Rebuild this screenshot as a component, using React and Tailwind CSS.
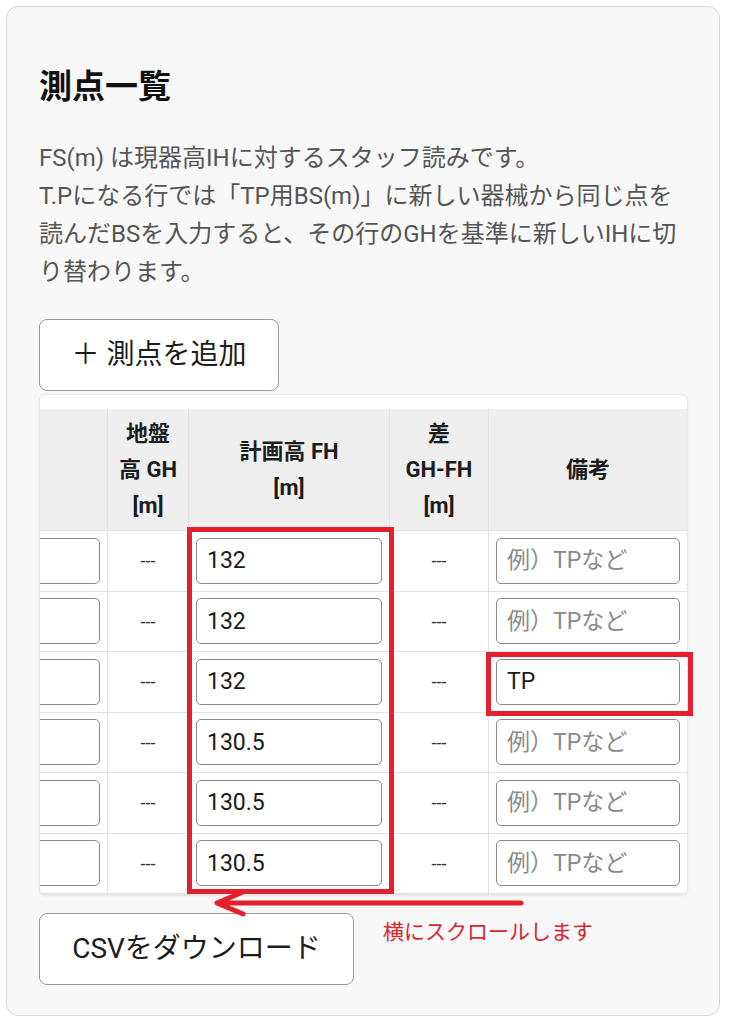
import { useLayoutEffect, useRef } from 'react';

const rows = [
  { fh: '132', note: '' },
  { fh: '132', note: '' },
  { fh: '132', note: 'TP' },
  { fh: '130.5', note: '' },
  { fh: '130.5', note: '' },
  { fh: '130.5', note: '' },
];

const gridCols =
  'grid grid-cols-[60px_140px_120px_120px_260px_81px_201px_99px_198px]';

const cellInput =
  'h-[46px] w-full rounded-[5px] border border-[#8a8a8a] bg-white px-[10px] text-[23px] text-[#1a1a1a] outline-none placeholder:text-[#8a8a8a]';

const HeadCell = ({ children, last }) => (
  <div
    className={`flex items-center justify-center border-b border-[#e2e2e2] px-[7px] text-center text-[22px] font-bold leading-[36px] text-[#1c1c1c] ${
      last ? '' : 'border-r'
    }`}
  >
    <span>{children}</span>
  </div>
);

const Cell = ({ children, last, center }) => (
  <div
    className={`flex items-center border-b border-[#e2e2e2] px-[7px] ${
      center ? 'justify-center' : ''
    } ${last ? '' : 'border-r'}`}
  >
    {children}
  </div>
);

export default function App() {
  const scrollRef = useRef(null);

  // the table is shown scrolled to its right end
  useLayoutEffect(() => {
    const el = scrollRef.current;
    if (el) el.scrollLeft = el.scrollWidth;
  }, []);

  return (
    <div
      className="relative min-h-[1024px] bg-white pt-[6px] pl-[6px]"
      style={{ fontFamily: 'Roboto, "Noto Sans CJK JP", sans-serif' }}
    >
      <div className="w-[714px] rounded-[12px] border border-[#d9d9d9] bg-[#f8f8f8] px-8 pt-[56px] pb-[30px]">
        <h2 className="text-[33px] font-bold leading-[48px] text-[#111]">測点一覧</h2>

        <div className="mt-[28px] text-[24px] leading-[38px] text-[#555]">
          <p>FS(m) は現器高IHに対するスタッフ読みです。</p>
          <p>
            T.Pになる行では「TP用BS(m)」に新しい器械から同じ点を読んだBSを入力すると、その行のGHを基準に新しいIHに切り替わります。
          </p>
        </div>

        <button className="mt-[28px] flex h-[72px] w-[240px] items-center justify-center rounded-[8px] border border-[#9a9a9a] bg-white text-[28px] text-[#1c1c1c]">
          ＋ 測点を追加
        </button>

        {/* scrollable table */}
        <div className="mt-[3px] w-[649px] rounded-[6px] border border-[#e6e6e6] bg-white pt-[14px] shadow-[0_1px_2px_rgba(0,0,0,0.08)]">
          <div
            ref={scrollRef}
            className="overflow-x-auto [scrollbar-width:none] [&::-webkit-scrollbar]:hidden"
          >
            <div className="w-[1279px]">
              <div className={`${gridCols} h-[122px] bg-[#efefef]`}>
                <HeadCell>No.</HeadCell>
                <HeadCell>測点名</HeadCell>
                <HeadCell>BS [m]</HeadCell>
                <HeadCell>FS [m]</HeadCell>
                <HeadCell>TP用BS</HeadCell>
                <HeadCell>
                  地盤
                  <br />高 GH
                  <br />[m]
                </HeadCell>
                <HeadCell>
                  計画高 FH
                  <br />[m]
                </HeadCell>
                <HeadCell>
                  差<br />GH-FH
                  <br />[m]
                </HeadCell>
                <HeadCell last>備考</HeadCell>
              </div>

              {rows.map((row, i) => (
                <div key={i} className={`${gridCols} h-[60.5px]`}>
                  <Cell center>
                    <span className="text-[20px] text-[#333]">{i + 1}</span>
                  </Cell>
                  <Cell>
                    <input className={cellInput} defaultValue={`No.${i + 1}`} />
                  </Cell>
                  <Cell>
                    <input className={cellInput} defaultValue="" />
                  </Cell>
                  <Cell>
                    <input className={cellInput} defaultValue="" />
                  </Cell>
                  <Cell>
                    <input className={cellInput} defaultValue="" />
                  </Cell>
                  <Cell center>
                    <span className="text-[18px] text-[#333]">---</span>
                  </Cell>
                  <Cell>
                    <input className={cellInput} defaultValue={row.fh} />
                  </Cell>
                  <Cell center>
                    <span className="text-[18px] text-[#333]">---</span>
                  </Cell>
                  <Cell last>
                    <input
                      className={cellInput}
                      defaultValue={row.note}
                      placeholder="例）TPなど"
                    />
                  </Cell>
                </div>
              ))}
            </div>
          </div>
        </div>

        <div className="mt-[18px] flex items-start gap-[29px]">
          <button className="flex h-[72px] w-[315px] items-center justify-center rounded-[8px] border border-[#9a9a9a] bg-white text-[28px] text-[#1c1c1c]">
            CSVをダウンロード
          </button>
          <p className="mt-[5px] text-[21px] leading-[28px] text-[#d8262f]">横にスクロールします</p>
        </div>
      </div>

      {/* red annotations */}
      <div className="pointer-events-none absolute left-[187px] top-[527px] h-[367px] w-[207px] border-[5px] border-[#e3202b]" />
      <div className="pointer-events-none absolute left-[486px] top-[652px] h-[64px] w-[207px] border-[5px] border-[#e3202b]" />
      <svg
        className="pointer-events-none absolute left-[205px] top-[885px]"
        width="330"
        height="40"
        viewBox="205 885 330 40"
      >
        <path
          d="M521 903 H218 M243 892 L217 903 L243 914"
          fill="none"
          stroke="#e3202b"
          strokeWidth="5"
          strokeLinecap="round"
          strokeLinejoin="round"
        />
      </svg>
    </div>
  );
}
